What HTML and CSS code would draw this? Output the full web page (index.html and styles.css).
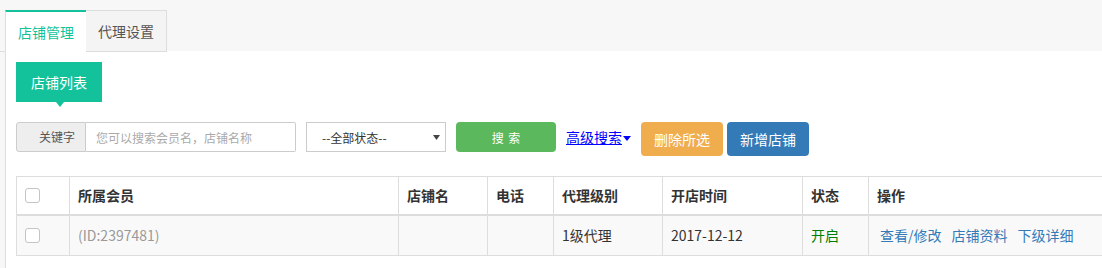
FILE: index.html
```html
<!DOCTYPE html>
<html lang="zh-CN">
<head>
<meta charset="utf-8">
<title>店铺管理</title>
<link rel="stylesheet" href="styles.css">
</head>
<body>
<div class="tabbar">
  <div class="tab tab-active">店铺管理</div>
  <div class="tab">代理设置</div>
</div>
<div class="panel">
  <div class="subtitle">店铺列表</div>
  <div class="search">
    <div class="group">
      <span class="addon">关键字</span>
      <input class="kw" type="text" placeholder="您可以搜索会员名，店铺名称">
    </div>
    <div class="select">
      <span>--全部状态--</span>
      <svg class="arrow" width="7" height="5" viewBox="0 0 7 5"><path d="M0 0H7L3.5 5Z" fill="#444"/></svg>
    </div>
    <button class="btn btn-search">搜 索</button>
    <a class="adv" href="#">高级搜索</a><svg class="caret" width="8" height="5" viewBox="0 0 8 5"><path d="M0 0H8L4 5Z" fill="#0000ff"/></svg>
    <button class="btn btn-big btn-warning">删除所选</button>
    <button class="btn btn-big btn-primary">新增店铺</button>
  </div>
  <table class="grid">
    <thead>
      <tr>
        <th class="c-check"><span class="cb"></span></th>
        <th class="c-member">所属会员</th>
        <th class="c-shop">店铺名</th>
        <th class="c-tel">电话</th>
        <th class="c-level">代理级别</th>
        <th class="c-time">开店时间</th>
        <th class="c-state">状态</th>
        <th class="c-op">操作</th>
      </tr>
    </thead>
    <tbody>
      <tr>
        <td class="c-check"><span class="cb"></span></td>
        <td class="muted">(ID:2397481)</td>
        <td></td>
        <td></td>
        <td>1级代理</td>
        <td>2017-12-12</td>
        <td class="on">开启</td>
        <td class="ops"><a href="#">查看/修改</a><a href="#">店铺资料</a><a href="#">下级详细</a></td>
      </tr>
    </tbody>
  </table>
</div>
</body>
</html>
```

FILE: styles.css
```css
* { box-sizing: border-box; }
html, body { margin: 0; padding: 0; }
body {
  background: #f7f7f7;
  font-family: "Noto Sans CJK SC", "Liberation Sans", sans-serif;
  color: #333;
  overflow: hidden;
  width: 1102px;
  height: 268px;
}

.tabbar {
  display: flex;
  height: 52px;
  padding: 10px 0 0 5px;
  border-bottom: 1px solid #dddddd;
}
.tab {
  width: 81px;
  height: 42px;
  font-size: 14px;
  line-height: 40px;
  text-align: center;
  color: #555;
  background: #f4f4f4;
  border: 1px solid #dddddd;
  border-left: none;
}
.tab-active {
  color: #13c29a;
  background: #fff;
  border-top: 2px solid #13c29a;
  border-left: 1px solid #dddddd;
  border-right: none;
  border-bottom: 1px solid #fff;
  line-height: 40px;
}

.panel {
  margin-left: 5px;
  margin-top: -1px;
  background: #fff;
  border-left: 1px solid #dddddd;
  height: 217px;
  padding: 11px 0 0 10px;
  overflow: hidden;
}

.subtitle {
  position: relative;
  width: 86px;
  height: 40px;
  background: #13c29a;
  color: #fff;
  font-size: 14px;
  line-height: 40px;
  text-align: center;
}
.subtitle::after {
  content: "";
  position: absolute;
  left: 40px;
  bottom: -5px;
  border-left: 4px solid transparent;
  border-right: 4px solid transparent;
  border-top: 5px solid #13c29a;
}

.search {
  display: flex;
  align-items: flex-start;
  margin-top: 20px;
  height: 34px;
}
.group {
  display: flex;
  height: 30px;
}
.addon {
  width: 70px;
  height: 30px;
  background: #eeeeee;
  border: 1px solid #cccccc;
  border-radius: 3px 0 0 3px;
  font-size: 12px;
  line-height: 28px;
  padding-left: 22px;
  color: #555;
}
.kw {
  width: 210px;
  height: 30px;
  border: 1px solid #cccccc;
  border-left: none;
  border-radius: 0 2px 2px 0;
  padding: 0 10px;
  font-family: "Noto Sans CJK SC", "Liberation Sans", sans-serif;
  font-size: 12px;
  color: #555;
  outline: none;
}
.kw::placeholder { color: #aaaaaa; }

.select {
  display: flex;
  align-items: center;
  justify-content: space-between;
  margin-left: 10px;
  width: 140px;
  height: 30px;
  border: 1px solid #cccccc;
  padding: 0 5px 0 15px;
  font-size: 12px;
  color: #333;
}

.btn {
  border: none;
  border-radius: 4px;
  color: #fff;
  font-family: "Noto Sans CJK SC", "Liberation Sans", sans-serif;
  padding: 0;
  cursor: pointer;
}
.btn-search {
  margin-left: 10px;
  width: 100px;
  height: 30px;
  background: #5cb85c;
  font-size: 12px;
  word-spacing: 2px;
}
.btn-big {
  width: 82px;
  height: 34px;
  font-size: 14px;
}
.btn-warning { background: #f0ad4e; margin-left: 10px; }
.btn-primary { background: #337ab7; margin-left: 4px; }

.adv {
  margin-left: 10px;
  margin-top: 5px;
  font-size: 14px;
  line-height: 20px;
  color: #0000ff;
  text-decoration: underline;
}
.caret {
  margin-top: 14px;
  margin-left: 1px;
}

.grid {
  margin-top: 20px;
  width: 1150px;
  border-collapse: collapse;
  table-layout: fixed;
  border: 1px solid #dddddd;
}
.grid th, .grid td {
  border: 1px solid #dddddd;
  padding: 0 8px;
  font-size: 14px;
  text-align: left;
  white-space: nowrap;
}
.grid th {
  height: 38px;
  font-weight: bold;
  color: #333;
  border-bottom: 2px solid #dddddd;
  background: #fff;
}
.grid td {
  height: 41px;
  background: #f9f9f9;
  color: #333;
}
.c-check { width: 53px; }
.c-member { width: 329px; }
.c-shop { width: 89px; }
.c-tel { width: 66px; }
.c-level { width: 109px; }
.c-time { width: 140px; }
.c-state { width: 66px; }

.cb {
  display: block;
  width: 15px;
  height: 15px;
  border: 1px solid #c4c4c4;
  border-radius: 3px;
  background: #fff;
}
.muted { color: #999 !important; }
.on { color: #008000 !important; }
.ops a {
  color: #337ab7;
  text-decoration: none;
  margin-left: 3px;
  margin-right: 7px;
}
```
